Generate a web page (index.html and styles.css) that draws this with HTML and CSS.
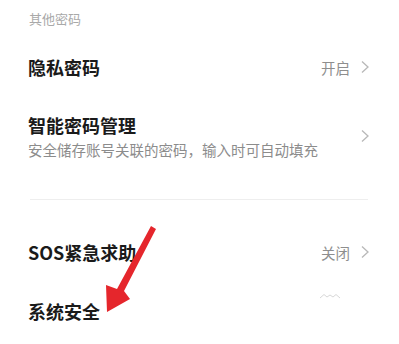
FILE: index.html
```html
<!DOCTYPE html>
<html lang="zh-CN">
<head>
  <meta charset="UTF-8">
  <meta name="viewport" content="width=device-width, initial-scale=1.0">
  <title>其他密码</title>
  <link rel="stylesheet" href="styles.css">
</head>
<body>
  <div class="page">
    <div class="group-title">其他密码</div>

    <div class="row row-single row-first">
      <div class="row-text">
        <div class="row-title">隐私密码</div>
      </div>
      <div class="row-value">开启</div>
      <svg class="chevron" viewBox="0 0 10 14"><path d="M2 1.5 L8 7 L2 12.5"/></svg>
    </div>

    <div class="row row-double">
      <div class="row-text">
        <div class="row-title">智能密码管理</div>
        <div class="row-sub">安全储存账号关联的密码，输入时可自动填充</div>
      </div>
      <svg class="chevron" viewBox="0 0 10 14"><path d="M2 1.5 L8 7 L2 12.5"/></svg>
    </div>

    <div class="divider"></div>

    <div class="row row-single row-sos">
      <div class="row-text">
        <div class="row-title">SOS紧急求助</div>
      </div>
      <div class="row-value">关闭</div>
      <svg class="chevron" viewBox="0 0 10 14"><path d="M2 1.5 L8 7 L2 12.5"/></svg>
    </div>

    <div class="row row-last">
      <div class="row-text">
        <div class="row-title">系统安全</div>
      </div>
      <svg class="squiggle" viewBox="0 0 22 6"><path d="M1 5 L5 1.5 L8 4 L11 2 L14 4 L17 1.5 L21 5"/></svg>
    </div>

    <!-- annotation arrow drawn over the list -->
    <svg class="arrow" viewBox="0 0 399 344">
      <path d="M151 226 L156 229 L124 291 L130 299 L107 312 L106 285 L117 289 Z"/>
    </svg>
  </div>
</body>
</html>
```

FILE: styles.css
```css
body {
  margin: 0;
  background: #fff;
  font-family: "Noto Sans CJK SC", "Noto Sans", sans-serif;
}
.page {
  position: relative;
  width: 399px;
  height: 344px;
  overflow: hidden;
}
.group-title {
  font-size: 13px;
  line-height: 13px;
  color: #a9a9a9;
  padding: 12px 29px 0;
}
.row {
  display: flex;
  align-items: center;
  padding: 0 29px 0 28px;
}
.row-text {
  flex: 1;
}
.row-title {
  font-size: 18px;
  line-height: 20px;
  font-weight: bold;
  color: #1a1a1a;
}
.row-sub {
  font-size: 14.5px;
  line-height: 16px;
  color: #8c8c8c;
  margin-top: 7px;
}
.row-value {
  font-size: 14.5px;
  color: #8e8e8e;
  margin-right: 10px;
}
.chevron {
  width: 10px;
  height: 14px;
  fill: none;
  stroke: #b8b8b8;
  stroke-width: 1.3;
}
.row-single {
  height: 58px;
}
.row-first {
  margin-top: 13px;
}
.row-sos {
  margin-top: 23px;
}
.row-double {
  height: 58px;
  margin-top: 7px;
  padding-top: 8px;
  box-sizing: border-box;
}
.divider {
  height: 1px;
  background: #eeeeee;
  margin: 38px 31px 0 30px;
}
.row-last {
  height: 40px;
  margin-top: 10px;
}
.squiggle {
  width: 22px;
  height: 6px;
  margin-right: 29px;
  margin-top: -30px;
  fill: none;
  stroke: #d8d8d8;
  stroke-width: 1;
}
.arrow {
  position: absolute;
  left: 0;
  top: 0;
  width: 399px;
  height: 344px;
  fill: #e5262c;
}
```
